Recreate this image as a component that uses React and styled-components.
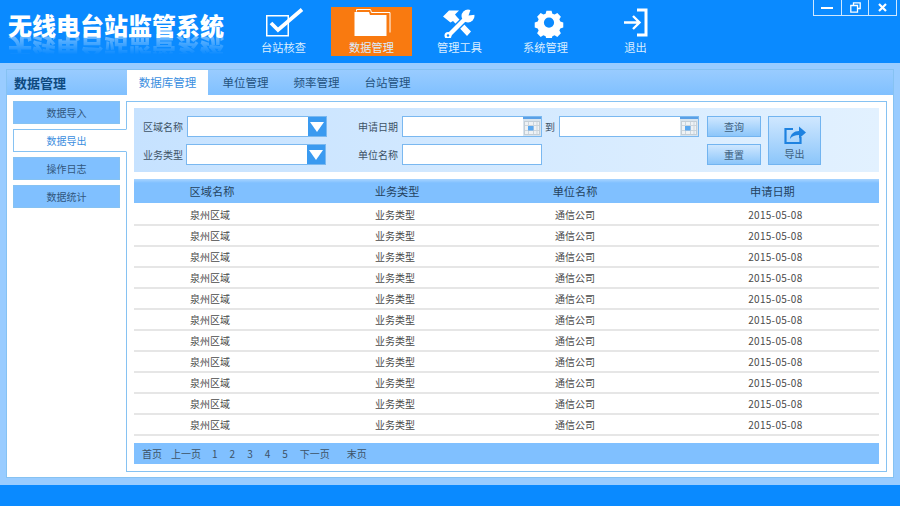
import React from 'react'
import styled, { createGlobalStyle } from 'styled-components'

const GlobalStyle = createGlobalStyle`
  html, body {
    margin: 0;
    padding: 0;
    background: #0a8aff;
  }
  body {
    font-family: "Noto Sans CJK SC", "Noto Sans", sans-serif;
  }
  * { box-sizing: border-box; }
`

const Page = styled.div`
  width: 900px;
  height: 506px;
  display: flex;
  flex-direction: column;
  overflow: hidden;
  position: relative;
`

const Header = styled.header`
  height: 63px;
  background: #0a8aff;
  display: flex;
  align-items: flex-start;
  flex-shrink: 0;
`

const LogoWrap = styled.div`
  width: 243px;
  padding: 10px 0 0 8px;
  position: relative;
  height: 63px;
`

const Logo = styled.h1`
  margin: 0;
  font-size: 24px;
  line-height: 30px;
  font-weight: 900;
  color: #fff;
  white-space: nowrap;
`

const LogoShadow = styled(Logo)`
  position: absolute;
  left: 8px;
  top: 32px;
  transform: scaleY(-1);
  opacity: 0.5;
  -webkit-mask-image: linear-gradient(to top, #000, transparent 75%);
  mask-image: linear-gradient(to top, #000, transparent 75%);
`

const Nav = styled.nav`
  display: flex;
  padding-top: 7px;
`

const NavItem = styled.div`
  width: 81px;
  height: 49px;
  margin-right: ${(p) => p.$gap}px;
  background: ${(p) => (p.$active ? '#f97a10' : 'transparent')};
  color: #d9edff;
  font-size: 11.2px;
  line-height: 14px;
  display: flex;
  flex-direction: column;
  align-items: center;
  justify-content: flex-end;
  padding-bottom: 2px;
  gap: 2px;
`

const NavIcon = styled.svg`
  width: 40px;
  height: 30px;
  display: block;
`

const WinControls = styled.div`
  position: absolute;
  top: -1px;
  right: 3px;
  width: 84px;
  height: 17px;
  display: flex;
  border: 1px solid #cfe8ff;
`

const WinButton = styled.div`
  flex: 1;
  display: flex;
  align-items: center;
  justify-content: center;
  & + & {
    border-left: 1px solid #cfe8ff;
  }
`

const Body = styled.main`
  flex: 1;
  min-height: 0;
  background: #99ccff;
  padding: 6px 6px 7px;
  display: flex;
  flex-direction: column;
`

const Panel = styled.section`
  flex: 1;
  min-height: 0;
  background: #fff;
  border: 1px solid #86c2f2;
  display: flex;
  flex-direction: column;
`

const PanelHead = styled.div`
  height: 25px;
  background: linear-gradient(#99ccff, #80c0ff);
  display: flex;
  align-items: flex-end;
  flex-shrink: 0;
`

const PanelTitle = styled.div`
  width: 120px;
  height: 25px;
  padding-left: 7px;
  font-size: 13px;
  line-height: 25px;
  font-weight: 700;
  color: #0e4a80;
`

const Tab = styled.div`
  width: ${(p) => p.$width}px;
  height: 25px;
  text-align: center;
  font-size: 11.5px;
  line-height: 25px;
  color: ${(p) => (p.$active ? '#3a8ee0' : '#24527e')};
  background: ${(p) => (p.$active ? '#fff' : 'transparent')};
`

const PanelBody = styled.div`
  flex: 1;
  min-height: 0;
  display: flex;
  padding: 6px 6px 5px 0;
`

const Side = styled.aside`
  width: 119px;
  flex-shrink: 0;
  padding: 0 6px;
  display: flex;
  flex-direction: column;
  gap: 5px;
  position: relative;
  z-index: 1;
`

const SideItem = styled.div`
  height: 23px;
  margin-right: ${(p) => (p.$active ? -7 : 0)}px;
  font-size: 10px;
  line-height: 21px;
  text-align: center;
  padding-right: ${(p) => (p.$active ? 7 : 0)}px;
  color: ${(p) => (p.$active ? '#3a8ee0' : '#30567c')};
  background: ${(p) => (p.$active ? '#fff' : '#80c0ff')};
  border: 1px solid #86c2f2;
  border-right-color: ${(p) => (p.$active ? '#fff' : '#86c2f2')};
`

const Content = styled.div`
  flex: 1;
  min-width: 0;
  border: 1px solid #86c2f2;
  padding: 6px 7px 7px;
  display: flex;
  flex-direction: column;
`

const Search = styled.div`
  height: 64px;
  background: linear-gradient(to right, #c6e2ff, #e2f1ff);
  padding: 8px 0 0 9px;
  display: flex;
  flex-shrink: 0;
  margin-bottom: 7px;
`

const Fields = styled.div`
  display: grid;
  grid-template-columns: 215px 187px 1fr;
  grid-template-rows: 21px 21px;
  row-gap: 7px;
  width: 564px;
`

const Field = styled.div`
  display: flex;
  align-items: center;
  gap: ${(p) => p.$gap ?? 4}px;
  font-size: 10px;
  color: #3d5266;
  white-space: nowrap;
`

const FieldLabel = styled.span`
  width: ${(p) => p.$width ?? 40}px;
  flex-shrink: 0;
`

const Input = styled.div`
  width: ${(p) => p.$width ?? 140}px;
  height: 21px;
  background: #fff;
  border: 1px solid #7ab8f0;
  position: relative;
  flex-shrink: 0;
`

const DropButton = styled.div`
  position: absolute;
  top: 0;
  right: 0;
  width: 18px;
  height: 19px;
  background: #3a9af0;
  display: flex;
  align-items: center;
  justify-content: center;
`

const CalendarButton = styled.svg`
  position: absolute;
  top: 0;
  right: 0;
  width: 18px;
  height: 19px;
`

const Buttons = styled.div`
  display: flex;
  gap: 7px;
`

const ButtonStack = styled.div`
  display: flex;
  flex-direction: column;
  gap: 7px;
`

const Button = styled.div`
  width: 54px;
  height: 21px;
  border: 1px solid #72b4f0;
  background: linear-gradient(#cfe7ff, #8cc6fa);
  font-size: 10px;
  line-height: 19px;
  text-align: center;
  color: #3d5f80;
`

const ExportButton = styled.div`
  width: 53px;
  height: 49px;
  border: 1px solid #72b4f0;
  background: linear-gradient(#cfe7ff, #8cc6fa);
  font-size: 10px;
  color: #3d5f80;
  display: flex;
  flex-direction: column;
  align-items: center;
  padding-top: 8px;
  gap: 2px;
  line-height: 14px;
`

const Table = styled.table`
  width: 100%;
  border-collapse: separate;
  border-spacing: 0;
  table-layout: fixed;
`

const HeadCell = styled.th`
  height: 26px;
  background: linear-gradient(#a8d4ff 0, #80c0ff 4px);
  background-clip: padding-box;
  border-bottom: 2px solid #fff;
  font-size: 11.2px;
  font-weight: 400;
  color: #24425e;
  padding: 0 0 0 ${(p) => p.$indent}px;
  text-align: center;
`

const Cell = styled.td`
  height: 21px;
  padding: 0;
  font-size: 10px;
  line-height: 18px;
  color: #4a4a4a;
  text-align: center;
  border-bottom: 2px solid #e6e6e6;
  &:last-child {
    padding-left: 26px;
    letter-spacing: 0.3px;
  }
`

const Pager = styled.div`
  height: 21px;
  margin-top: auto;
  background: #80c0ff;
  display: flex;
  align-items: center;
  padding-left: 8px;
  font-size: 10px;
  color: #3d5266;
  flex-shrink: 0;
`

const PageLink = styled.span`
  margin-right: ${(p) => p.$gap}px;
`

const Footer = styled.footer`
  height: 21px;
  background: #0a8aff;
  flex-shrink: 0;
`

const rows = Array.from({ length: 11 })

const pageLinks = [
  ['首页', 9],
  ['上一页', 11],
  ['1', 12],
  ['2', 12],
  ['3', 12],
  ['4', 12],
  ['5', 12],
  ['下一页', 17],
  ['末页', 0],
]

const columns = [
  { label: '区域名称', indent: 4 },
  { label: '业务类型', indent: 4 },
  { label: '单位名称', indent: 0 },
  { label: '申请日期', indent: 20 },
]

const Caret = () => (
  <svg width="14" height="10" viewBox="0 0 14 10">
    <path d="M0 0h14L7 10z" fill="#fff" />
  </svg>
)

const Calendar = () => (
  <CalendarButton viewBox="0 0 18 19">
    <rect width="18" height="19" fill="#d8e4ee" />
    <rect width="18" height="2" fill="#5aa0e6" />
    <rect x="1.500" y="4.500" width="15" height="13" fill="#eef2f5" stroke="#c4ced6" />
    <path d="M5.500 5v12M10.500 5v12M14 5v12M2 8.500h14M2 13.500h14" stroke="#ccd5dc" />
    <rect x="5" y="9" width="5.500" height="4.500" fill="#5aa8f0" />
  </CalendarButton>
)

const App = () => (
  <Page>
    <GlobalStyle />
    <Header>
      <LogoWrap>
        <Logo>无线电台站监管系统</Logo>
        <LogoShadow aria-hidden="true">无线电台站监管系统</LogoShadow>
      </LogoWrap>
      <Nav>
        <NavItem $gap={7}>
          <NavIcon viewBox="0 0 40 30">
            <rect x="2.750" y="7.750" width="21.500" height="20" fill="none" stroke="#fff" strokeWidth="1.500" />
            <path d="M7 15l7 7L38 1.500" fill="none" stroke="#fff" strokeWidth="3.800" />
          </NavIcon>
          台站核查
        </NavItem>
        <NavItem $active $gap={7}>
          <NavIcon viewBox="0 0 40 30">
            <path d="M4.500 3.500v-2h14l1 3h18.500v20" fill="none" stroke="#fff" strokeWidth="1" />
            <path d="M2.500 4H17l1 3h16.500v21H2.500z" fill="#fff" />
          </NavIcon>
          数据管理
        </NavItem>
        <NavItem $gap={5}>
          <NavIcon viewBox="0 0 40 30">
            <path d="M3 8.500L9 2.500h10l-4 4 2 2.500 14 14.500-4 4.500-14-15-2.500 1.500z" fill="#fff" />
            <path d="M9 27L26 10" stroke="#0a8aff" strokeWidth="7" />
            <path d="M9 27L26 10" stroke="#fff" strokeWidth="4.500" />
            <circle cx="28" cy="8" r="6.500" fill="#fff" />
            <path d="M28.500 7.500L31 .500h6v6z" fill="#0a8aff" />
            <circle cx="8" cy="27.500" r="3.500" fill="#fff" />
            <circle cx="8" cy="27.500" r="1.200" fill="#0a8aff" />
          </NavIcon>
          管理工具
        </NavItem>
        <NavItem $gap={9}>
          <NavIcon viewBox="0 0 40 30">
            <path
              d="M17 2h6l1 3.500 2.600 1.100 3.200-1.800 4.200 4.200-1.800 3.200 1.100 2.600 3.500 1v6l-3.500 1-1.100 2.600 1.800 3.200-4.200 4.200-3.200-1.800-2.600 1.100-1 3.500h-6l-1-3.500-2.600-1.100-3.200 1.800-4.200-4.200 1.800-3.200-1.100-2.600-3.500-1v-6l3.500-1 1.100-2.600-1.800-3.200 4.200-4.200 3.200 1.800 2.600-1.100zM20 10a6 6 0 1 0 0 12 6 6 0 0 0 0-12z"
              fill="#fff"
              fillRule="evenodd"
              transform="translate(6 1) scale(.85)"
            />
          </NavIcon>
          系统管理
        </NavItem>
        <NavItem $gap={0}>
          <NavIcon viewBox="0 0 40 30">
            <path d="M8 14.500h14M17 8l6.500 6.500L17 21" fill="none" stroke="#fff" strokeWidth="2.400" />
            <path d="M21 2h9v25h-9" fill="none" stroke="#fff" strokeWidth="3" />
          </NavIcon>
          退出
        </NavItem>
      </Nav>
      <WinControls>
        <WinButton>
          <svg width="12" height="4" viewBox="0 0 12 4">
            <rect y="1" width="12" height="2" fill="#fff" />
          </svg>
        </WinButton>
        <WinButton>
          <svg width="11" height="11" viewBox="0 0 11 11">
            <path d="M3.500 3V.8h6.700v5.700H7.500M.8 3.500h6.700v6.700H.8z" fill="none" stroke="#fff" strokeWidth="1.300" />
          </svg>
        </WinButton>
        <WinButton>
          <svg width="9" height="9" viewBox="0 0 9 9">
            <path d="M1 1l7 7M8 1L1 8" stroke="#fff" strokeWidth="2.200" />
          </svg>
        </WinButton>
      </WinControls>
    </Header>
    <Body>
      <Panel>
        <PanelHead>
          <PanelTitle>数据管理</PanelTitle>
          <Tab $active $width={81}>数据库管理</Tab>
          <Tab $width={75}>单位管理</Tab>
          <Tab $width={67}>频率管理</Tab>
          <Tab $width={75}>台站管理</Tab>
        </PanelHead>
        <PanelBody>
          <Side>
            <SideItem>数据导入</SideItem>
            <SideItem $active>数据导出</SideItem>
            <SideItem>操作日志</SideItem>
            <SideItem>数据统计</SideItem>
          </Side>
          <Content>
            <Search>
              <Fields>
                <Field>
                  <FieldLabel>区域名称</FieldLabel>
                  <Input>
                    <DropButton><Caret /></DropButton>
                  </Input>
                </Field>
                <Field>
                  <FieldLabel>申请日期</FieldLabel>
                  <Input>
                    <Calendar />
                  </Input>
                </Field>
                <Field $gap={4}>
                  <FieldLabel $width={10}>到</FieldLabel>
                  <Input>
                    <Calendar />
                  </Input>
                </Field>
                <Field $gap={3}>
                  <FieldLabel>业务类型</FieldLabel>
                  <Input>
                    <DropButton><Caret /></DropButton>
                  </Input>
                </Field>
                <Field>
                  <FieldLabel>单位名称</FieldLabel>
                  <Input />
                </Field>
              </Fields>
              <Buttons>
                <ButtonStack>
                  <Button>查询</Button>
                  <Button>重置</Button>
                </ButtonStack>
                <ExportButton>
                  <svg width="22" height="20" viewBox="0 0 22 20">
                    <path d="M9 4H1.500v14h15v-6" fill="none" stroke="#1e82e0" strokeWidth="2.200" />
                    <path d="M6 14c.5-5 4-8 9-8V1.500L22 7.500l-7 6V10c-4 0-7 1-9 4z" fill="#1e82e0" />
                  </svg>
                  导出
                </ExportButton>
              </Buttons>
            </Search>
            <Table>
              <colgroup>
                <col style={{ width: '20.4%' }} />
                <col style={{ width: '29.3%' }} />
                <col style={{ width: '19%' }} />
                <col style={{ width: '31.3%' }} />
              </colgroup>
              <thead>
                <tr>
                  {columns.map((c) => (
                    <HeadCell key={c.label} $indent={c.indent}>{c.label}</HeadCell>
                  ))}
                </tr>
              </thead>
              <tbody>
                {rows.map((_, i) => (
                  <tr key={i}>
                    <Cell>泉州区域</Cell>
                    <Cell>业务类型</Cell>
                    <Cell>通信公司</Cell>
                    <Cell>2015-05-08</Cell>
                  </tr>
                ))}
              </tbody>
            </Table>
            <Pager>
              {pageLinks.map(([label, gap]) => (
                <PageLink key={label} $gap={gap}>{label}</PageLink>
              ))}
            </Pager>
          </Content>
        </PanelBody>
      </Panel>
    </Body>
    <Footer />
  </Page>
)

export default App
